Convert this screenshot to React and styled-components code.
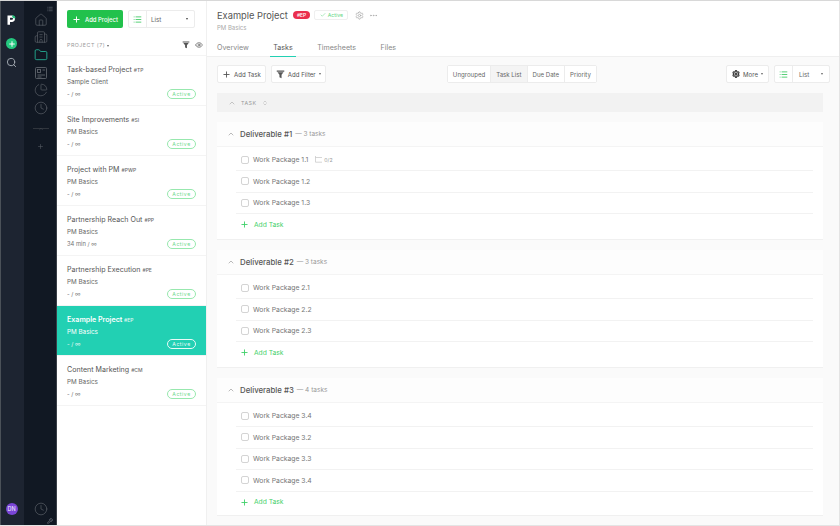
import styled, { createGlobalStyle } from "styled-components";
import {
  Home,
  Building2,
  Folder,
  PieChart,
  Clock,
  Search,
  Plus,
  List,
  Eye,
  Settings,
  ChevronUp,
  ChevronsUpDown,
  Ellipsis,
  Wrench,
  Check,
} from "lucide-react";

const GlobalStyle = createGlobalStyle`
  html, body {
    margin: 0;
    padding: 0;
    width: 840px;
    height: 526px;
    overflow: hidden;
    background: #fff;
    font-family: Inter, "Liberation Sans", sans-serif;
    color: #555;
  }
  * { box-sizing: border-box; }
`;

const projects = [
  { name: "Task-based Project", tag: "#TP", client: "Sample Client", time: "- / ∞" },
  { name: "Site Improvements", tag: "#SI", client: "PM Basics", time: "- / ∞" },
  { name: "Project with PM", tag: "#PWP", client: "PM Basics", time: "- / ∞" },
  { name: "Partnership Reach Out", tag: "#PP", client: "PM Basics", time: "34 min / ∞" },
  { name: "Partnership Execution", tag: "#PE", client: "PM Basics", time: "- / ∞" },
  { name: "Example Project", tag: "#EP", client: "PM Basics", time: "- / ∞", selected: true },
  { name: "Content Marketing", tag: "#CM", client: "PM Basics", time: "- / ∞" },
];

const deliverables = [
  { name: "Deliverable #1", tasks: ["Work Package 1.1", "Work Package 1.2", "Work Package 1.3"] },
  { name: "Deliverable #2", tasks: ["Work Package 2.1", "Work Package 2.2", "Work Package 2.3"] },
  {
    name: "Deliverable #3",
    tasks: ["Work Package 3.4", "Work Package 3.2", "Work Package 3.3", "Work Package 3.4"],
  },
];

const LogoMark = () => (
  <svg width="9" height="10" viewBox="0 0 9 10">
    <path
      d="M0.5 0.5H5.2A3.3 3.3 0 0 1 5.2 7H3V9.8H0.5z M3 2.8V4.8H5A1 1 0 0 0 5 2.8z"
      fill="#fff"
      fillRule="evenodd"
    />
    <path d="M5.2 0.3A3.3 3.3 0 0 1 8.5 3.2H6.2A1 1 0 0 0 5.2 2.3z" fill="#25c77f" />
  </svg>
);

const FunnelIcon = ({ size = 8 }) => (
  <svg width={size} height={size} viewBox="0 0 12 12" fill="currentColor">
    <path d="M1 0.8h10v1.4H1z M2 3h8L7.4 6.4V11L4.6 9.8V6.4z" />
  </svg>
);

const ReportIcon = () => (
  <svg width="14" height="14" viewBox="0 0 14 14" fill="none" stroke="currentColor" strokeWidth="0.9">
    <rect x="1.5" y="1.5" width="11" height="11" rx="1" />
    <rect x="3.5" y="3.5" width="3" height="3" />
    <path d="M8.5 4h2.5M3.5 9h7.5M3.5 11h4" />
  </svg>
);

const SubtaskIcon = () => (
  <svg width="8" height="7" viewBox="0 0 8 7" fill="none" stroke="currentColor" strokeWidth="0.7">
    <path d="M1.5 0v6.2H8M1.5 1.5H8" />
  </svg>
);

const App = () => {
  return (
    <>
      <GlobalStyle />
      <Page>
        <Rail>
          <Logo>
            <LogoMark />
          </Logo>
          <RoundAdd>
            <Plus size={8} strokeWidth={3} />
          </RoundAdd>
          <RailSearch>
            <Search size={11} />
          </RailSearch>
          <Avatar>DN</Avatar>
        </Rail>

        <NavRail>
          <NavCorner>
            <List size={6} />
          </NavCorner>
          <NavItem>
            <Home size={14} strokeWidth={1.1} />
          </NavItem>
          <NavItem>
            <Building2 size={14} strokeWidth={1.1} />
          </NavItem>
          <NavItem $active>
            <Folder size={14} strokeWidth={1.3} />
          </NavItem>
          <NavItem>
            <ReportIcon />
          </NavItem>
          <NavItem>
            <PieChart size={14} strokeWidth={1.1} />
          </NavItem>
          <NavItem>
            <Clock size={14} strokeWidth={1.1} />
          </NavItem>
          <NavDivider>
            <ChevronUp size={6} />
          </NavDivider>
          <NavPlus>
            <Plus size={7} />
          </NavPlus>
          <NavBottom>
            <Clock size={14} strokeWidth={1.1} />
          </NavBottom>
          <NavWrench>
            <Wrench size={6} />
          </NavWrench>
        </NavRail>

        <Sidebar>
          <SideTop>
            <PrimaryButton>
              <Plus size={9} strokeWidth={2.6} />
              Add Project
            </PrimaryButton>
            <ViewSelect $width="67px">
              <ViewIcon $width="18px">
                <List size={9} />
              </ViewIcon>
              <ViewLabel>List</ViewLabel>
              <Caret />
            </ViewSelect>
          </SideTop>
          <SideHead>
            <HeadLabel>
              PROJECT (7) <Caret $dark />
            </HeadLabel>
            <HeadIcons>
              <FunnelIcon />
              <Eye size={8} />
            </HeadIcons>
          </SideHead>
          {projects.map((p) => (
            <ProjectCard key={p.name} $selected={p.selected}>
              <ProjectName $selected={p.selected}>
                {p.name} <Tag>{p.tag}</Tag>
              </ProjectName>
              <ProjectClient>{p.client}</ProjectClient>
              <ProjectFoot>
                <span>{p.time}</span>
                <StatusPill>Active</StatusPill>
              </ProjectFoot>
            </ProjectCard>
          ))}
        </Sidebar>

        <Main>
          <Header>
            <TitleRow>
              <Title>Example Project</Title>
              <RedTag>#EP</RedTag>
              <ActiveBadge>
                <Check size={6} />
                Active
              </ActiveBadge>
              <MutedIcon>
                <Settings size={9} />
              </MutedIcon>
              <MutedIcon $tight>
                <Ellipsis size={9} />
              </MutedIcon>
            </TitleRow>
            <Subtitle>PM Basics</Subtitle>
            <Tabs>
              <TabItem>Overview</TabItem>
              <TabItem $active>Tasks</TabItem>
              <TabItem>Timesheets</TabItem>
              <TabItem>Files</TabItem>
            </Tabs>
          </Header>

          <Content>
            <Toolbar>
              <ToolGroup>
                <ToolButton>
                  <Plus size={9} strokeWidth={2.4} />
                  Add Task
                </ToolButton>
                <ToolButton>
                  <FunnelIcon size={9} />
                  Add Filter
                  <Caret $dark />
                </ToolButton>
              </ToolGroup>
              <Segments>
                <Segment>Ungrouped</Segment>
                <Segment $active>Task List</Segment>
                <Segment>Due Date</Segment>
                <Segment>Priority</Segment>
              </Segments>
              <ToolGroup>
                <ToolButton $wide>
                  <Settings size={8} strokeWidth={3.4} color="#333" />
                  More
                  <Caret $dark />
                </ToolButton>
                <ViewSelect $width="56px">
                  <ViewIcon $width="18px">
                    <List size={9} />
                  </ViewIcon>
                  <ViewLabel $center>List</ViewLabel>
                  <Caret $dark />
                </ViewSelect>
              </ToolGroup>
            </Toolbar>

            <TaskBar>
              <ChevronUp size={8} color="#aaa" />
              TASK
              <ChevronsUpDown size={6} color="#aaa" />
            </TaskBar>

            {deliverables.map((d) => (
              <Card key={d.name}>
                <CardHead>
                  <ChevronUp size={8} color="#999" />
                  <CardTitle>{d.name}</CardTitle>
                  <CardCount>— {d.tasks.length} tasks</CardCount>
                </CardHead>
                <Rows>
                  {d.tasks.map((t, i) => (
                    <Row key={d.name + i}>
                      <Checkbox />
                      {t}
                      {t === "Work Package 1.1" && (
                        <SubCount>
                          <SubtaskIcon />
                          0/2
                        </SubCount>
                      )}
                    </Row>
                  ))}
                  <AddRow>
                    <Plus size={9} strokeWidth={2.4} />
                    Add Task
                  </AddRow>
                </Rows>
              </Card>
            ))}
          </Content>
        </Main>
      </Page>
    </>
  );
};

const Page = styled.div`
  display: flex;
  width: 840px;
  height: 526px;
  overflow: hidden;
  border-top: 1px solid #d8d8d8;
  border-bottom: 1px solid #e4e4e4;
  border-right: 1px solid #e4e4e4;
`;

const Rail = styled.aside`
  flex: 0 0 24px;
  background: #1d2431;
  border-left: 1px solid #4b5158;
  display: flex;
  flex-direction: column;
  align-items: center;
  padding: 14px 2px 0 0;
`;

const Logo = styled.div`
  height: 10px;
  display: flex;
`;

const RoundAdd = styled.div`
  width: 11px;
  height: 11px;
  margin-top: 13px;
  border-radius: 50%;
  background: #25c77f;
  color: #fff;
  display: flex;
  align-items: center;
  justify-content: center;
`;

const RailSearch = styled.div`
  margin-top: 8px;
  color: #aab0b8;
  display: flex;
`;

const Avatar = styled.div`
  margin-top: auto;
  margin-bottom: 10px;
  width: 12px;
  height: 12px;
  border-radius: 50%;
  background: #7a45d6;
  color: #e8e0f8;
  font-size: 5.5px;
  font-weight: 500;
  display: flex;
  align-items: center;
  justify-content: center;
`;

const NavRail = styled.nav`
  flex: 0 0 33px;
  background: #111823;
  border-right: 1px solid #3a3f47;
  display: flex;
  flex-direction: column;
  align-items: center;
  padding: 5px 0 0 1px;
`;

const NavCorner = styled.div`
  align-self: flex-end;
  margin-right: 3px;
  height: 5px;
  color: #7c818a;
  display: flex;
`;

const NavItem = styled.div`
  height: 17.6px;
  display: flex;
  align-items: center;
  justify-content: center;
  color: ${(p) => (p.$active ? "#27c9a8" : "#5f646c")};
`;

const NavDivider = styled.div`
  width: 16px;
  margin-top: 9px;
  height: 6px;
  color: #4b5058;
  display: flex;
  justify-content: center;
  align-items: center;
  background: linear-gradient(#30353d, #30353d) center / 100% 1px no-repeat;
`;

const NavPlus = styled.div`
  margin-top: 11px;
  color: #555a62;
  display: flex;
`;

const NavBottom = styled.div`
  margin-top: auto;
  margin-bottom: 2px;
  color: #5f646c;
  display: flex;
`;

const NavWrench = styled.div`
  align-self: flex-end;
  margin-right: 3px;
  margin-bottom: 1px;
  color: #8a8f96;
  display: flex;
`;

const Sidebar = styled.section`
  flex: 0 0 150px;
  background: #fff;
  border-right: 1px solid #f0f0f0;
  display: flex;
  flex-direction: column;
`;

const SideTop = styled.div`
  display: flex;
  align-items: center;
  gap: 5px;
  padding: 9px 0 0 10px;
`;

const PrimaryButton = styled.button`
  width: 56px;
  height: 18px;
  border: 0;
  border-radius: 2px;
  background: #22c14c;
  color: #fff;
  font: 500 5.9px Inter, sans-serif;
  display: flex;
  align-items: center;
  justify-content: center;
  gap: 4px;
  padding: 0;
`;

const ViewSelect = styled.div`
  width: ${(p) => p.$width};
  height: 18px;
  background: #fff;
  border: 1px solid #ececec;
  border-radius: 2px;
  display: flex;
  align-items: center;
  padding-right: 6px;
`;

const ViewIcon = styled.div`
  width: ${(p) => p.$width};
  height: 100%;
  border-right: 1px solid #ececec;
  color: #22c14c;
  display: flex;
  align-items: center;
  justify-content: center;
`;

const ViewLabel = styled.span`
  flex: 1;
  font-size: 6.2px;
  color: #666;
  padding-left: ${(p) => (p.$center ? "6px" : "4px")};
`;

const Caret = styled.i`
  display: inline-block;
  width: 0;
  height: 0;
  border-left: 1.8px solid transparent;
  border-right: 1.8px solid transparent;
  border-top: 2px solid ${(p) => (p.$dark ? "#666" : "#444")};
  vertical-align: middle;
`;

const SideHead = styled.div`
  height: 28px;
  padding: 7px 3px 0 10px;
  display: flex;
  align-items: center;
  justify-content: space-between;
  border-bottom: 1px solid #f4f4f4;
`;

const HeadLabel = styled.div`
  font-size: 5.3px;
  letter-spacing: 0.5px;
  color: #999;
`;

const HeadIcons = styled.div`
  display: flex;
  align-items: center;
  gap: 5px;
  color: #555;
`;

const ProjectCard = styled.article`
  height: 50px;
  flex: none;
  padding: 8.5px 10px 0;
  border-bottom: 1px solid #f4f4f4;
  background: ${(p) => (p.$selected ? "#22d0b3" : "#fff")};
  color: ${(p) => (p.$selected ? "#fff" : "#666")};
  --pill: ${(p) => (p.$selected ? "#fff" : "#8ce6a6")};
  --pill-text: ${(p) => (p.$selected ? "#fff" : "#62d683")};
`;

const ProjectName = styled.div`
  font-size: 7.1px;
  line-height: 10px;
  font-weight: ${(p) => (p.$selected ? 600 : 400)};
  color: ${(p) => (p.$selected ? "#fff" : "#555")};
`;

const Tag = styled.span`
  font-size: 5px;
  font-weight: 500;
  opacity: 0.85;
`;

const ProjectClient = styled.div`
  margin-top: 2px;
  font-size: 6.3px;
  line-height: 10px;
`;

const ProjectFoot = styled.div`
  margin-top: 2px;
  display: flex;
  align-items: center;
  justify-content: space-between;
  font-size: 5.8px;
  height: 10px;
  opacity: 0.9;
`;

const StatusPill = styled.span`
  width: 29px;
  height: 10px;
  border-radius: 5px;
  border: 1px solid var(--pill);
  color: var(--pill-text);
  font-size: 5.2px;
  letter-spacing: 0.5px;
  display: flex;
  align-items: center;
  justify-content: center;
`;

const Main = styled.main`
  flex: 1;
  min-width: 0;
  background: #fafafa;
  display: flex;
  flex-direction: column;
`;

const Header = styled.header`
  height: 56px;
  flex: none;
  background: #fff;
  border-bottom: 1px solid #efefef;
  padding: 7px 10px 0;
`;

const TitleRow = styled.div`
  display: flex;
  align-items: center;
  height: 14px;
`;

const Title = styled.h1`
  margin: 0;
  font-size: 9.3px;
  font-weight: 400;
  color: #555;
`;

const RedTag = styled.span`
  margin-left: 5px;
  padding: 0 4px;
  height: 8px;
  border-radius: 4px;
  background: #ea2f4e;
  color: #fff;
  font-size: 5px;
  line-height: 8px;
  font-weight: 500;
`;

const ActiveBadge = styled.span`
  margin-left: 4px;
  width: 34px;
  height: 10px;
  border: 1px solid #efefef;
  border-radius: 2px;
  color: #62d683;
  font-size: 5.2px;
  display: flex;
  align-items: center;
  justify-content: center;
  gap: 2px;
`;

const MutedIcon = styled.span`
  margin-left: ${(p) => (p.$tight ? "5px" : "7px")};
  color: #aaa;
  display: flex;
`;

const Subtitle = styled.div`
  margin-top: 1px;
  font-size: 6px;
  line-height: 9px;
  color: #aaa;
`;

const Tabs = styled.div`
  display: flex;
  gap: 24.5px;
  margin-top: 10px;
`;

const TabItem = styled.div`
  height: 15px;
  margin: 0 ${(p) => (p.$active ? "-3px" : "0")};
  padding: 0 ${(p) => (p.$active ? "3px" : "0")};
  font-size: 7.1px;
  line-height: 11px;
  color: ${(p) => (p.$active ? "#555" : "#888")};
  border-bottom: 1px solid ${(p) => (p.$active ? "#22d0b3" : "transparent")};
`;

const Content = styled.div`
  flex: 1;
  padding: 8px 16px 0 10px;
`;

const Toolbar = styled.div`
  display: flex;
  align-items: center;
  justify-content: space-between;
  margin-right: -7px;
  height: 18px;
`;

const ToolGroup = styled.div`
  display: flex;
  gap: 5px;
`;

const ToolButton = styled.button`
  height: 18px;
  padding: 0 ${(p) => (p.$wide ? "5px" : "4px")};
  background: #fff;
  border: 1px solid #ececec;
  border-radius: 2px;
  color: #555;
  font: 400 6.1px Inter, sans-serif;
  display: flex;
  align-items: center;
  gap: 3px;
`;

const Segments = styled.div`
  display: flex;
  height: 18px;
  margin-right: 8px;
  background: #fff;
  border: 1px solid #ececec;
  border-radius: 2px;
`;

const Segment = styled.div`
  padding: 0 5px;
  font-size: 6.1px;
  color: #666;
  display: flex;
  align-items: center;
  background: ${(p) => (p.$active ? "#f4f4f4" : "#fff")};
  & + & {
    border-left: 1px solid #ececec;
  }
`;

const TaskBar = styled.div`
  margin-top: 10px;
  height: 19px;
  background: #f2f2f2;
  padding-left: 11px;
  display: flex;
  align-items: center;
  gap: 5px;
  font-size: 5.3px;
  letter-spacing: 0.5px;
  color: #999;
`;

const Card = styled.section`
  margin-top: 10px;
  height: 118px;
  background: #fff;
  border-bottom: 1px solid #f0f0f0;
  &:last-of-type {
    height: 138px;
  }
`;

const CardHead = styled.div`
  height: 25px;
  padding-left: 10px;
  display: flex;
  align-items: center;
  background: #fdfdfd;
  border-bottom: 1px solid #f4f4f4;
`;

const CardTitle = styled.span`
  margin-left: 5px;
  font-size: 7.8px;
  font-weight: 500;
  color: #555;
`;

const CardCount = styled.span`
  margin-left: 3px;
  font-size: 6.5px;
  color: #999;
`;

const Rows = styled.div`
  padding: 2.5px 10px 0 19px;
`;

const Row = styled.div`
  height: 21.5px;
  display: flex;
  align-items: center;
  gap: 4px;
  border-bottom: 1px solid #f2f2f2;
  font-size: 6.8px;
  color: #777;
  padding-left: 5px;
`;

const Checkbox = styled.span`
  width: 8px;
  height: 8px;
  border: 1px solid #d4d4d4;
  border-radius: 2px;
  background: #fff;
`;

const SubCount = styled.span`
  margin-left: 2px;
  display: flex;
  align-items: center;
  gap: 2px;
  font-size: 5.2px;
  color: #999;
  & svg {
    color: #c4c4c4;
  }
`;

const AddRow = styled.div`
  height: 21.5px;
  display: flex;
  align-items: center;
  gap: 5px;
  padding-left: 4px;
  font-size: 6.7px;
  color: #3fd06a;
`;

export default App;
